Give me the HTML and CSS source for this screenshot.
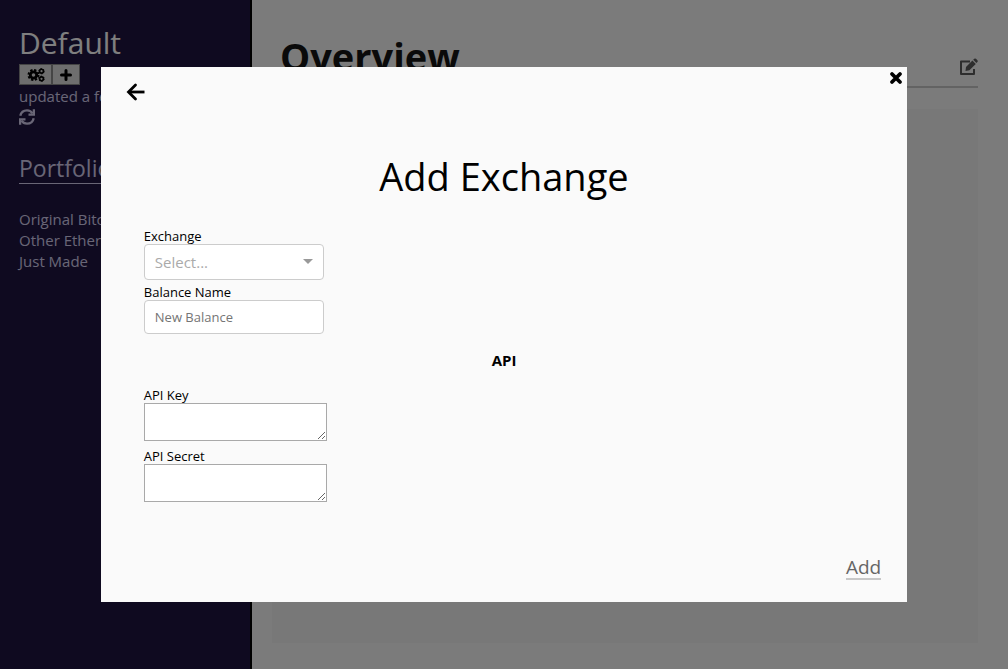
FILE: index.html
```html
<!DOCTYPE html>
<html lang="en">
<head>
<meta charset="utf-8">
<title>Overview</title>
<link rel="stylesheet" href="styles.css">
</head>
<body>
<div class="app">
  <aside class="sidebar">
    <h2 class="profile">Default</h2>
    <div class="tools">
      <button class="tool tool-wide" type="button" aria-label="Settings">
        <svg width="18" height="14" viewBox="0 0 18 14" fill="none" stroke="#000"><circle cx="6.500" cy="7" r="3.200" stroke-width="2.800"/><circle cx="6.500" cy="7" r="5" stroke-width="2" stroke-dasharray="2.300 1.627"/><circle cx="14.500" cy="3.200" r="1.900" stroke-width="1.600"/><circle cx="14.500" cy="3.200" r="2.700" stroke-width="1" stroke-dasharray="1.500 1.327"/><circle cx="14.500" cy="10.800" r="1.900" stroke-width="1.600"/><circle cx="14.500" cy="10.800" r="2.700" stroke-width="1" stroke-dasharray="1.500 1.327"/></svg>
      </button>
      <button class="tool" type="button" aria-label="Add">
        <svg width="12" height="12" viewBox="0 0 12 12"><path d="M6 1.500v9M1.500 6h9" stroke="#000" stroke-width="3" stroke-linecap="round"/></svg>
      </button>
    </div>
    <p class="updated">updated a few seconds ago</p>
    <button class="refresh" type="button" aria-label="Refresh">
      <svg width="16" height="16" viewBox="0 0 16 16" fill="none" stroke="currentColor" stroke-width="2.300"><path d="M1.300 6.800C2 3.500 4.800 1.300 8 1.300c2.400 0 4.300 1.100 5.500 3M14.700 9.200c-.7 3.300-3.500 5.500-6.700 5.500-2.400 0-4.300-1.100-5.500-3"/><path d="M14.900 .3V5.700H9.500M1.100 15.700V10.300h5.400"/></svg>
    </button>
    <h3 class="group">Portfolios</h3>
    <ul class="list">
      <li>Original Bitcoin</li>
      <li>Other Ethereum</li>
      <li>Just Made</li>
    </ul>
  </aside>
  <main class="main">
    <header class="head">
      <h1 class="title">Overview</h1>
      <button class="edit" type="button" aria-label="Edit">
        <svg width="18" height="18" viewBox="0 0 18 18"><path d="M10 3.500H1V16h13V11" fill="none" stroke="currentColor" stroke-width="2" stroke-linejoin="round"/><path d="M5.500 13l.5-4.100 6.400-6.400 3.400 3.400-6.400 6.400zM13.200 1.800l1-1q.9-.8 1.800 0l1.400 1.400q.8.900 0 1.800l-1 1z" fill="currentColor"/></svg>
      </button>
    </header>
    <section class="panel"></section>
  </main>
</div>
<div class="overlay">
  <section class="modal" role="dialog" aria-modal="true" aria-labelledby="modal-title">
    <div class="modal-bar">
      <button class="back" type="button" aria-label="Back">
        <svg width="20" height="18" viewBox="0 0 20 18" fill="none" stroke="#000" stroke-width="2.800"><path d="M3 9h15.500"/><path d="M9.500 2L2.500 9l7 7" stroke-linecap="round"/></svg>
      </button>
      <button class="close" type="button" aria-label="Close">
        <svg width="14" height="14" viewBox="0 0 14 14"><path d="M3 3l8 8M11 3l-8 8" stroke="#000" stroke-width="3.800" stroke-linecap="round"/></svg>
      </button>
    </div>
    <h2 class="modal-title" id="modal-title">Add Exchange</h2>
    <form class="form">
      <label class="label" for="exchange">Exchange</label>
      <select class="field select" id="exchange"><option>Select...</option></select>
      <label class="label label-next" for="balance">Balance Name</label>
      <input class="field input" id="balance" type="text" placeholder="New Balance">
      <h4 class="section">API</h4>
      <label class="label" for="key">API Key</label>
      <textarea class="area" id="key"></textarea>
      <label class="label label-area" for="secret">API Secret</label>
      <textarea class="area" id="secret"></textarea>
      <button class="submit" type="submit">Add</button>
    </form>
  </section>
</div>
</body>
</html>
```
FILE: styles.css
```css
* { box-sizing: border-box; }
body {
  margin: 0;
  font-family: "Segoe UI", "Open Sans", "Noto Sans", sans-serif;
  font-size: 15px;
  line-height: 21px;
  color: #000;
}
h1, h2, h3, h4, p, ul { margin: 0; padding: 0; font-weight: 400; }
button { padding: 0; border: 0; background: none; font: inherit; color: inherit; cursor: pointer; }
svg { display: block; }

.app { display: flex; min-height: 100vh; background: #f7f7f7; }
.sidebar {
  flex: 0 0 252px;
  padding: 22px 19px;
  border-right: 2px solid #000;
  background: #1e1540;
  color: #d2ccec;
  white-space: nowrap;
}
.profile { font-size: 30px; line-height: 42px; color: #fff; }
.tools { display: flex; }
.tool {
  display: flex;
  align-items: center;
  justify-content: center;
  width: 28px;
  height: 21px;
  border: 1px solid #8a8a8a;
  background: #dcdcdc;
}
.tool-wide { width: 33px; }
.updated { margin-top: 1px; overflow: hidden; }
.refresh { display: block; margin-top: 2px; }
.group {
  margin-top: 28px;
  border-bottom: 1px solid #d2ccec;
  font-size: 23px;
  line-height: 30px;
}
.list { margin-top: 25px; list-style: none; }

.main { display: flex; flex: 1; flex-direction: column; padding: 30px 30px 26px 20px; }
.head {
  display: flex;
  align-items: center;
  justify-content: space-between;
  height: 58px;
  padding-left: 8px;
  border-bottom: 2px solid #c6c6c6;
}
.title { padding-bottom: 4px; font-size: 38px; line-height: 52px; font-weight: 700; color: #141414; }
.edit { margin-top: 18px; color: #5c5c5c; }
.panel { flex: 1; margin-top: 21px; background: #f0f0f0; }

.overlay {
  position: fixed;
  inset: 0;
  display: flex;
  align-items: center;
  justify-content: center;
  background: rgba(0, 0, 0, 0.5);
}
.modal {
  display: flex;
  flex-direction: column;
  width: 80%;
  min-height: 80%;
  background: #fafafa;
}
.modal-bar { display: flex; justify-content: space-between; align-items: flex-start; padding: 4px 4px 0 25px; }
.back { margin-top: 12px; }
.modal-title { margin-top: 49px; font-size: 38px; line-height: 52px; text-align: center; }
.form { display: flex; flex: 1; flex-direction: column; align-items: flex-start; padding: 26px 26px 22px 43px; }
.label { font-size: 13px; line-height: 16px; font-weight: 400; }
.label-next { margin-top: 4px; }
.label-area { margin-top: 7px; }
.field {
  width: 180px;
  border: 1px solid #ccc;
  border-radius: 4px;
  padding: 0 10px;
  background: #fff;
  font-family: inherit;
}
.select {
  height: 36px;
  appearance: none;
  background: #fff url("data:image/svg+xml,%3Csvg xmlns='http://www.w3.org/2000/svg' width='10' height='5'%3E%3Cpath d='M0 0h10L5 5z' fill='%23999'/%3E%3C/svg%3E") no-repeat right 10px center;
  color: #aaa;
  font-size: 15px;
}
.input { height: 34px; font-size: 13px; }
.input::placeholder { color: #757575; }
.section { align-self: center; margin: 16px 0 17px; padding-right: 17px; font-weight: 700; font-size: 15px; line-height: 20px; }
.area { width: 183px; height: 38px; border: 1px solid #a9a9a9; border-radius: 0; background: #fff; font-family: inherit; }
.submit {
  align-self: flex-end;
  margin-top: auto;
  border-bottom: 2px solid #c8c8c8;
  font-size: 19px;
  line-height: 21px;
  color: #666;
}
```
